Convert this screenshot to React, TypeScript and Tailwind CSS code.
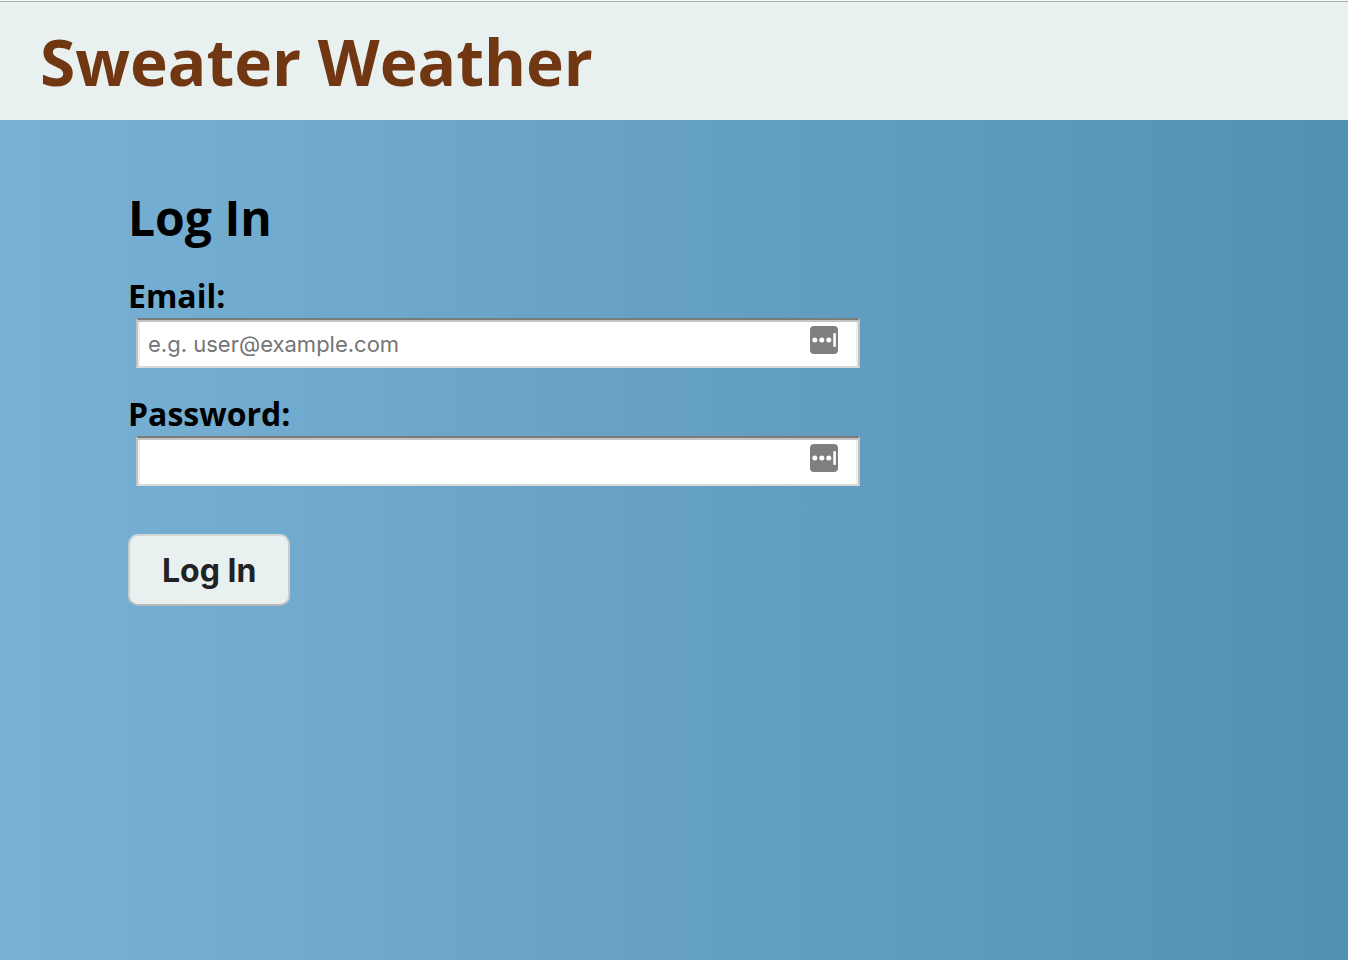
import React from "react";

function FillIcon() {
  return (
    <svg viewBox="0 0 28 28" className="pointer-events-none absolute top-2 right-[22px] size-7" aria-hidden="true">
      <rect width="28" height="28" rx="4" fill="#7f7f7f" />
      <circle cx="4.8" cy="14" r="2.5" fill="#fff" />
      <circle cx="11.8" cy="14" r="2.5" fill="#fff" />
      <circle cx="18.8" cy="14" r="2.5" fill="#fff" />
      <rect x="23.3" y="7" width="2.6" height="14" rx="1" fill="#fff" />
    </svg>
  );
}

type FieldProps = { id: string; label: string; type: string; placeholder?: string };

function Field({ id, label, type, placeholder }: FieldProps) {
  return (
    <div className="flex flex-col">
      <label htmlFor={id} className="text-[32px] leading-[44px] font-bold">
        {label}
      </label>
      <div className="relative ml-2">
        <input
          id={id}
          type={type}
          placeholder={placeholder}
          className="block h-[50px] w-full border-2 border-[#c2c2c2] border-t-[#7b7b7b] border-b-[#dadada] bg-white px-2.5 pt-0.5 font-['Inter',sans-serif] text-[22px] text-black shadow-[inset_0_2px_0_#c4c4c4,inset_2px_0_0_#eeeeee,inset_-2px_0_0_#eeeeee] placeholder:text-[#757575]"
        />
        <FillIcon />
      </div>
    </div>
  );
}

export default function App() {
  return (
    <div className="flex min-h-screen flex-col border-t border-[#f2f5f5] bg-linear-to-r/srgb from-[#78b1d5] to-[#5391b3] font-['Open_Sans',sans-serif] text-black">
      <header className="border-t border-[#adb3b2] bg-[#e8f1f0] px-10 pt-[17px] pb-[15px]">
        <h1 className="text-[64px] leading-[86px] font-bold text-[#713612]">Sweater Weather</h1>
      </header>
      <main className="px-32 pt-16">
        <form className="flex w-full max-w-[732px] flex-col" onSubmit={(e) => e.preventDefault()}>
          <h2 className="mb-[22px] text-[48px] leading-[68px] font-bold">Log In</h2>
          <div className="flex flex-col gap-6">
            <Field id="email" label="Email:" type="email" placeholder="e.g. user@example.com" />
            <Field id="password" label="Password:" type="password" />
          </div>
          <button
            type="submit"
            className="mt-12 h-[72px] self-start rounded-[10px] border-2 border-[#cccccc] border-t-[#d6d6d6] border-b-[#b8b8b8] bg-[#e8f1f0] px-8 pt-0.5 font-['Inter',sans-serif] text-[32px] font-bold text-[#222222]"
          >
            Log In
          </button>
        </form>
      </main>
    </div>
  );
}
